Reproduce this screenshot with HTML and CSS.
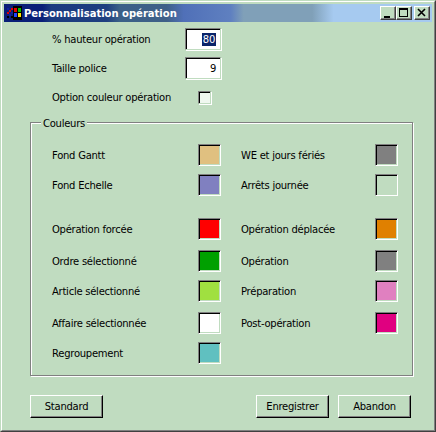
FILE: index.html
```html
<!DOCTYPE html>
<html lang="fr">
<head>
<meta charset="utf-8">
<title>Personnalisation opération</title>
<link rel="stylesheet" href="styles.css">
</head>
<body>
<div class="window">
  <div class="window-inner">
    <header class="titlebar">
      <svg class="app-icon" width="16" height="16" viewBox="0 0 16 16">
        <rect x="7" y="1" width="9" height="14" fill="#000"/>
        <rect x="1" y="3" width="2" height="2" fill="#1020a0"/>
        <rect x="3" y="5" width="2" height="2" fill="#e00000"/>
        <rect x="5" y="3" width="2" height="2" fill="#e00000"/>
        <rect x="1" y="7" width="2" height="2" fill="#e00000"/>
        <rect x="5" y="7" width="2" height="2" fill="#1020a0"/>
        <rect x="3" y="9" width="2" height="2" fill="#1020a0"/>
        <rect x="1" y="11" width="2" height="2" fill="#000"/>
        <rect x="5" y="11" width="2" height="2" fill="#000"/>
        <rect x="8" y="3" width="3" height="4" fill="#e00000"/>
        <rect x="12" y="3" width="3" height="4" fill="#00c000"/>
        <rect x="8" y="8" width="3" height="4" fill="#2040ff"/>
        <rect x="12" y="8" width="3" height="4" fill="#ffe000"/>
      </svg>
      <span class="title-text">Personnalisation opération</span>
      <div class="title-buttons">
        <span class="tb-btn"><svg width="14" height="12" viewBox="0 0 14 12"><rect x="3" y="9" width="6" height="2" fill="#000"/></svg></span>
        <span class="tb-btn"><svg width="14" height="12" viewBox="0 0 14 12"><path d="M2 1h9v9H2z M3 3v6h7V3z" fill="#000" fill-rule="evenodd"/></svg></span>
        <span class="tb-btn tb-close"><svg width="14" height="12" viewBox="0 0 14 12"><path d="M3 2l7 7M10 2l-7 7" stroke="#000" stroke-width="1.6" fill="none"/></svg></span>
      </div>
    </header>

    <main class="content">
      <div class="field">
        <span class="label field-label">% hauteur opération</span>
        <div class="textbox"><span class="selected">80</span></div>
      </div>
      <div class="field">
        <span class="label field-label">Taille police</span>
        <div class="textbox">9</div>
      </div>
      <div class="field field-check">
        <span class="label field-label">Option couleur opération</span>
        <span class="checkbox"></span>
      </div>

      <section class="group">
        <span class="legend">Couleurs</span>
        <div class="group-columns">
          <div class="col col-left">
            <div class="row"><span class="label">Fond Gantt</span><span class="swatch c-gantt"></span></div>
            <div class="row"><span class="label">Fond Echelle</span><span class="swatch c-echelle"></span></div>
            <div class="row row-sep"><span class="label">Opération forcée</span><span class="swatch c-red"></span></div>
            <div class="row"><span class="label">Ordre sélectionné</span><span class="swatch c-green"></span></div>
            <div class="row row-loose"><span class="label">Article sélectionné</span><span class="swatch c-lime"></span></div>
            <div class="row"><span class="label">Affaire sélectionnée</span><span class="swatch c-white"></span></div>
            <div class="row"><span class="label">Regroupement</span><span class="swatch c-teal"></span></div>
          </div>
          <div class="col col-right">
            <div class="row"><span class="label">WE et jours fériés</span><span class="swatch c-gray"></span></div>
            <div class="row"><span class="label">Arrêts journée</span><span class="swatch c-none"></span></div>
            <div class="row row-sep"><span class="label">Opération déplacée</span><span class="swatch c-orange"></span></div>
            <div class="row"><span class="label">Opération</span><span class="swatch c-gray"></span></div>
            <div class="row row-loose"><span class="label">Préparation</span><span class="swatch c-pink"></span></div>
            <div class="row"><span class="label">Post-opération</span><span class="swatch c-magenta"></span></div>
          </div>
        </div>
      </section>

      <footer class="actions">
        <button class="btn" type="button">Standard</button>
        <div class="actions-right">
          <button class="btn" type="button">Enregistrer</button>
          <button class="btn" type="button">Abandon</button>
        </div>
      </footer>
    </main>
  </div>
</div>
</body>
</html>
```
FILE: styles.css
```css
* { box-sizing: border-box; }
html, body { margin: 0; padding: 0; }
body {
  width: 436px;
  height: 432px;
  overflow: hidden;
  background: #c0dcc0;
  font-family: "DejaVu Sans", sans-serif;
  font-size: 10px;
  letter-spacing: -0.25px;
  color: #000;
}
.window {
  width: 436px;
  height: 432px;
  border: 1px solid;
  border-color: #c0dcc0 #404040 #404040 #c0dcc0;
  background: #c0dcc0;
}
.window-inner {
  height: 100%;
  border: 1px solid;
  border-color: #fff #808080 #808080 #fff;
  padding: 2px;
  display: flex;
  flex-direction: column;
}
.titlebar {
  height: 18px;
  flex: none;
  display: flex;
  align-items: center;
  padding: 0 2px;
  background: linear-gradient(90deg, #0a1f78 0%, #0a1f78 9%, #1a3a80 11%, #1f3f80 24%, #3a6088 27%, #3f6088 38%, #5070b8 42%, #5f80c0 53%, #80a0b8 56%, #80a0b8 72%, #a6caf0 77%, #a6caf0 100%);
}
.app-icon { flex: none; }
.title-text {
  margin-left: 2px;
  color: #fff;
  font-weight: bold;
  letter-spacing: 0;
  white-space: nowrap;
}
.title-buttons {
  margin-left: auto;
  display: flex;
}
.tb-btn {
  width: 16px;
  height: 14px;
  background: #c0dcc0;
  border: 1px solid;
  border-color: #fff #404040 #404040 #fff;
  box-shadow: inset -1px -1px 0 #808080;
  display: flex;
}
.tb-close { margin-left: 2px; }
.content {
  flex: 1;
  display: flex;
  flex-direction: column;
  padding: 6px 0 0 26px;
}
.label { white-space: nowrap; }
.field {
  display: flex;
  align-items: center;
  height: 22px;
  margin: 0 0 7px 22px;
}
.field-label { width: 133px; flex: none; }
.textbox {
  width: 36px;
  height: 22px;
  background: #fff;
  border: 1px solid;
  border-color: #808080 #c0dcc0 #c0dcc0 #808080;
  box-shadow: inset 1px 1px 0 #000, 1px 1px 0 #fff;
  display: flex;
  align-items: center;
  justify-content: flex-end;
  padding-right: 4px;
}
.selected {
  background: #0a246a;
  color: #fff;
  padding: 0 1px;
  line-height: 13px;
}
.field-check { margin-bottom: 14px; }
.field-check .field-label { width: 146px; }
.checkbox {
  width: 13px;
  height: 13px;
  background: #f0f8f0;
  border: 1px solid;
  border-color: #808080 #c0dcc0 #c0dcc0 #808080;
  box-shadow: inset 1px 1px 0 #000, 1px 1px 0 #fff;
}
.group {
  position: relative;
  width: 383px;
  height: 254px;
  border: 1px solid #808080;
  box-shadow: 1px 1px 0 #fff, inset 1px 1px 0 #fff;
  padding: 21px 0 0 21px;
}
.legend {
  position: absolute;
  top: -5px;
  left: 10px;
  padding: 0 2px;
  background: #c0dcc0;
  line-height: 12px;
}
.group-columns {
  display: flex;
  gap: 20px;
}
.col { display: flex; flex-direction: column; }
.col-left { width: 169px; }
.col-right { width: 157px; }
.row {
  display: flex;
  align-items: center;
  justify-content: space-between;
  height: 22px;
  margin-bottom: 8px;
}
.row-sep { margin-top: 14px; margin-bottom: 10px; }
.row-loose { margin-bottom: 10px; }
.swatch {
  width: 23px;
  height: 22px;
  flex: none;
  border: 1px solid;
  border-color: #808080 #fff #fff #808080;
  box-shadow: inset 1px 1px 0 #000, inset -1px -1px 0 #c0dcc0;
}
.c-gantt { background: #e0c080; }
.c-echelle { background: #8080c0; }
.c-red { background: #ff0000; }
.c-green { background: #00a000; }
.c-lime { background: #a0e040; }
.c-white { background: #fff; }
.c-teal { background: #60c0c0; }
.c-gray { background: #808080; }
.c-none { background: #c0dcc0; }
.c-orange { background: #e08000; }
.c-pink { background: #e080c0; }
.c-magenta { background: #e00080; }
.actions {
  display: flex;
  justify-content: space-between;
  width: 381px;
  margin-top: 19px;
}
.actions-right { display: flex; gap: 9px; }
.btn {
  width: 73px;
  height: 23px;
  padding: 0;
  background: #c0dcc0;
  border: 1px solid;
  border-color: #fff #000 #000 #fff;
  box-shadow: inset -1px -1px 0 #808080;
  font: inherit;
  letter-spacing: inherit;
  color: #000;
}
```
